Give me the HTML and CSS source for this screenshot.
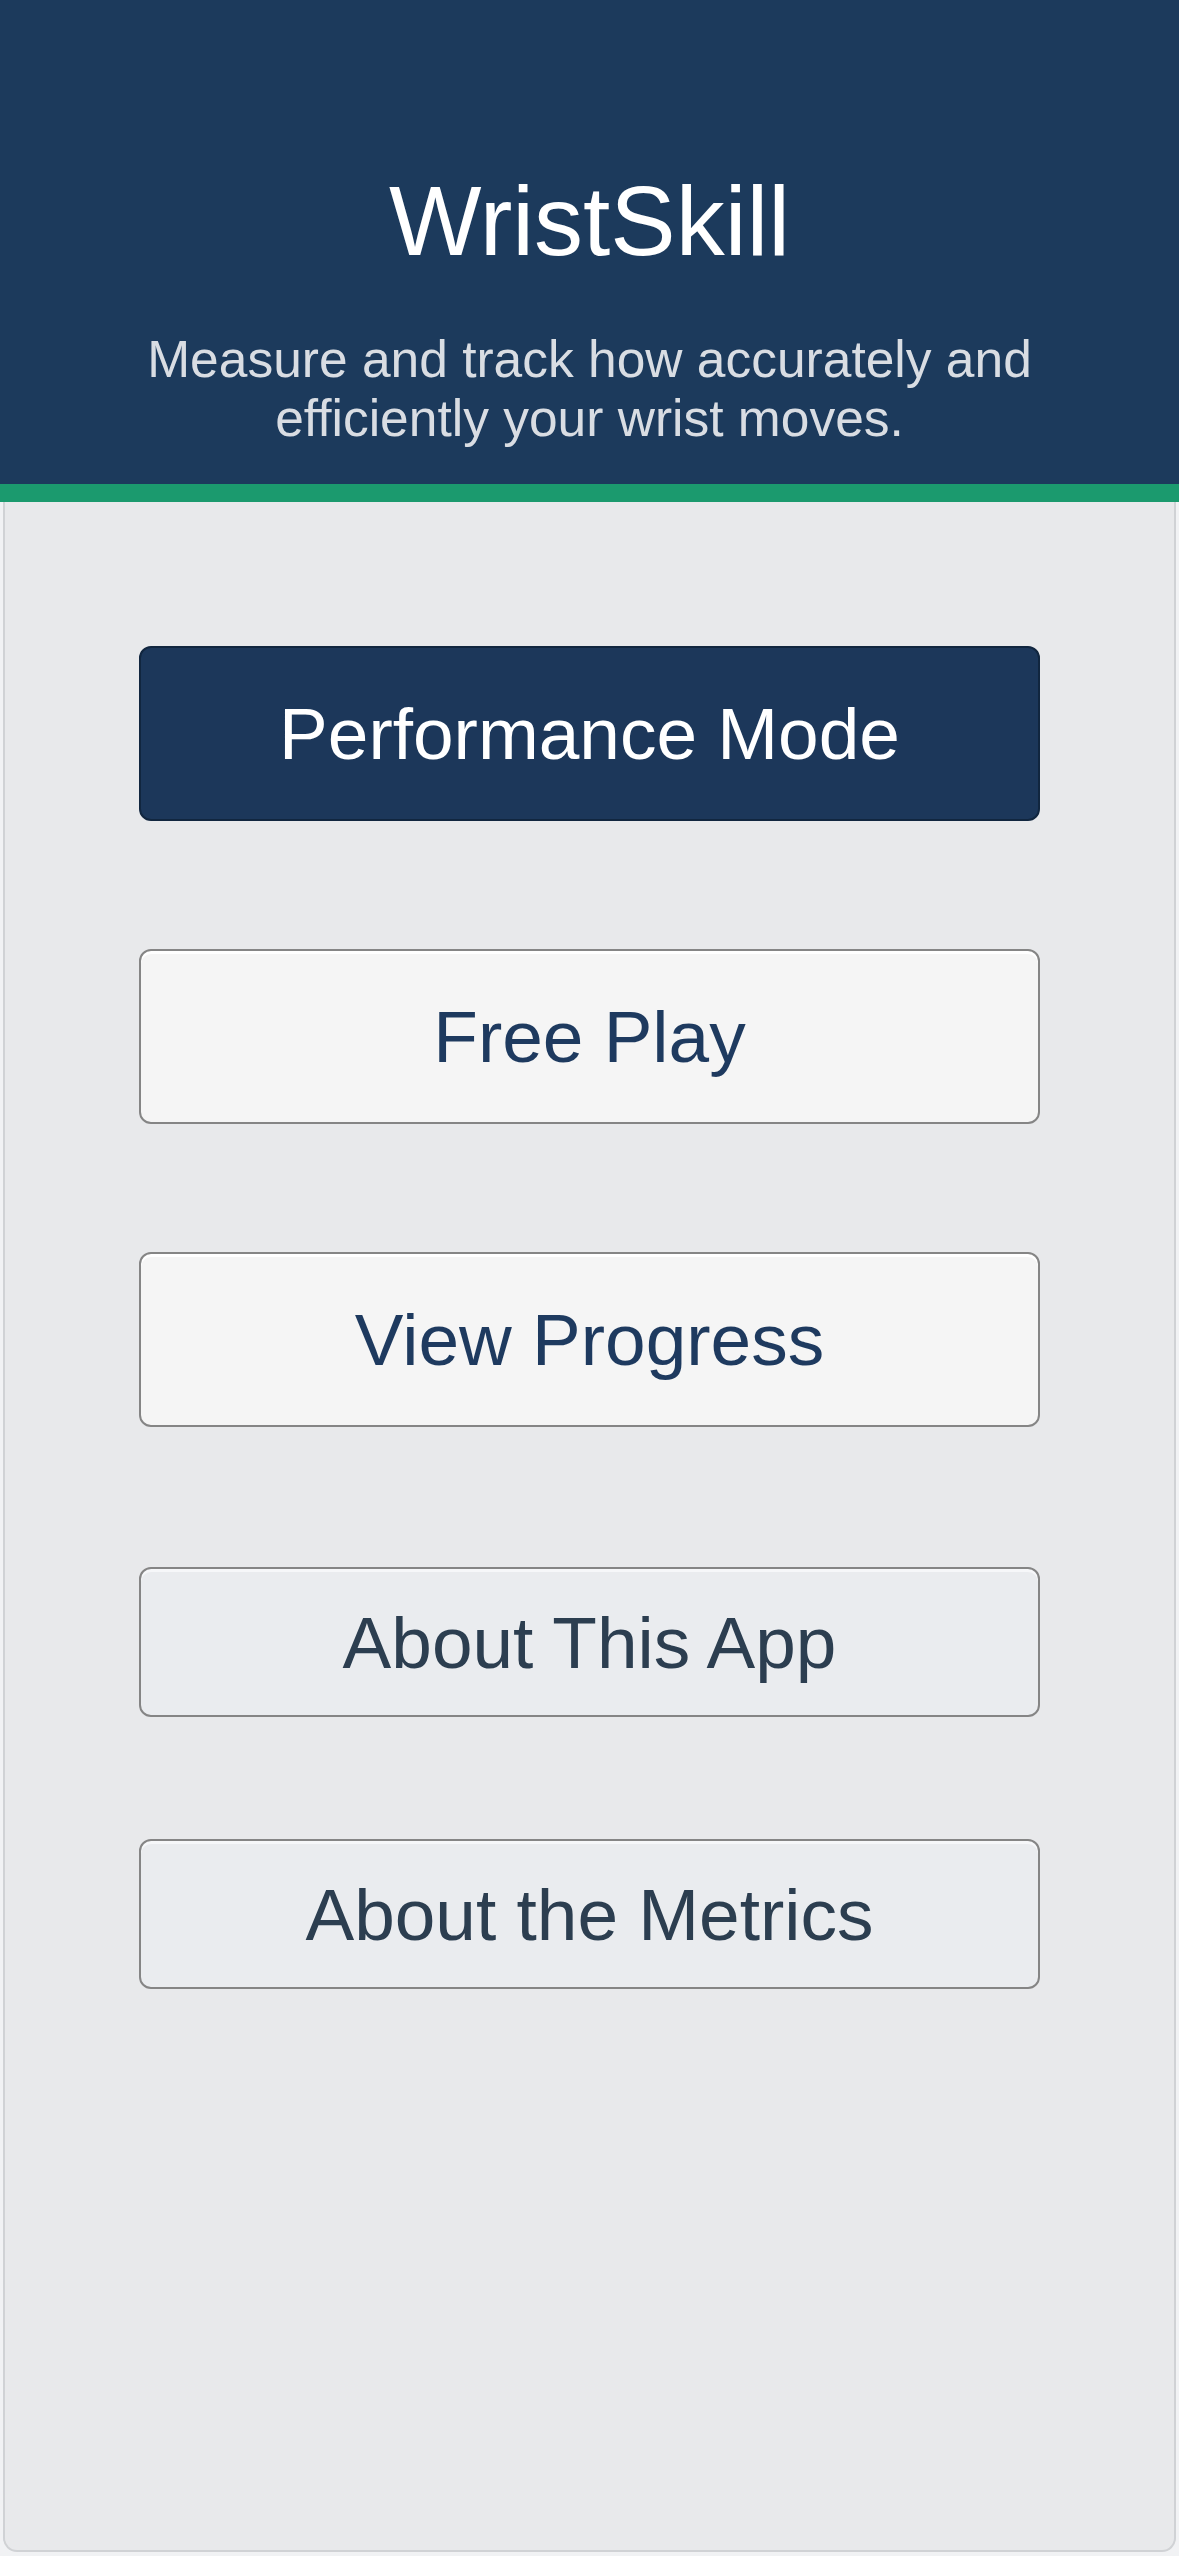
FILE: index.html
```html
<!DOCTYPE html>
<html lang="en">
<head>
<meta charset="utf-8">
<title>WristSkill</title>
<link rel="stylesheet" href="styles.css">
</head>
<body>
  <header class="hero">
    <h1 class="hero-title">WristSkill</h1>
    <p class="hero-sub">Measure and track how accurately and<br>efficiently your wrist moves.</p>
  </header>
  <main class="panel">
    <div class="group group-main">
      <button class="btn btn-primary">Performance Mode</button>
      <button class="btn btn-secondary">Free Play</button>
      <button class="btn btn-secondary">View Progress</button>
    </div>
    <div class="group group-info">
      <button class="btn btn-info">About This App</button>
      <button class="btn btn-info">About the Metrics</button>
    </div>
  </main>
</body>
</html>
```

FILE: styles.css
```css
* { box-sizing: border-box; }
html, body {
  margin: 0;
  padding: 0;
}
body {
  width: 1179px;
  height: 2556px;
  background: #f1f2f4;
  font-family: "Liberation Sans", Arial, sans-serif;
  overflow: hidden;
}
.hero {
  background: #1c3a5c;
  border-bottom: 18px solid #1b9a6e;
  padding: 165px 40px 36px;
  text-align: center;
}
.hero-title {
  margin: 0;
  font-weight: 400;
  font-size: 98px;
  line-height: 112px;
  color: #ffffff;
}
.hero-sub {
  margin: 53px 0 0;
  font-size: 51.5px;
  line-height: 59px;
  color: #d9dde3;
}
.panel {
  margin: 0 3px;
  height: 2050px;
  background: #e8e9eb;
  border: 2px solid #d0d2d5;
  border-top: none;
  border-radius: 0 0 14px 14px;
  display: flex;
  flex-direction: column;
  align-items: center;
  padding-top: 144px;
}
.group {
  display: flex;
  flex-direction: column;
  width: 901px;
}
.group-main { gap: 128px; }
.group-info { gap: 122px; margin-top: 140px; }
.btn {
  display: block;
  width: 100%;
  font-family: "Liberation Sans", Arial, sans-serif;
  font-size: 73px;
  font-weight: 400;
  border-radius: 12px;
  text-align: center;
  padding: 0;
  cursor: pointer;
}
.btn-primary {
  height: 175px;
  background: #1c375a;
  border: 2px solid #11263f;
  color: #ffffff;
}
.btn-secondary {
  height: 175px;
  background: #f5f5f5;
  border: 2px solid #858585;
  box-shadow: inset 0 3px 0 #ffffff;
  color: #1e3a5f;
}
.btn-info {
  height: 150px;
  background: #eaecef;
  border: 2px solid #858585;
  box-shadow: inset 0 3px 0 #f6f7f9;
  color: #2c3e50;
}
```
